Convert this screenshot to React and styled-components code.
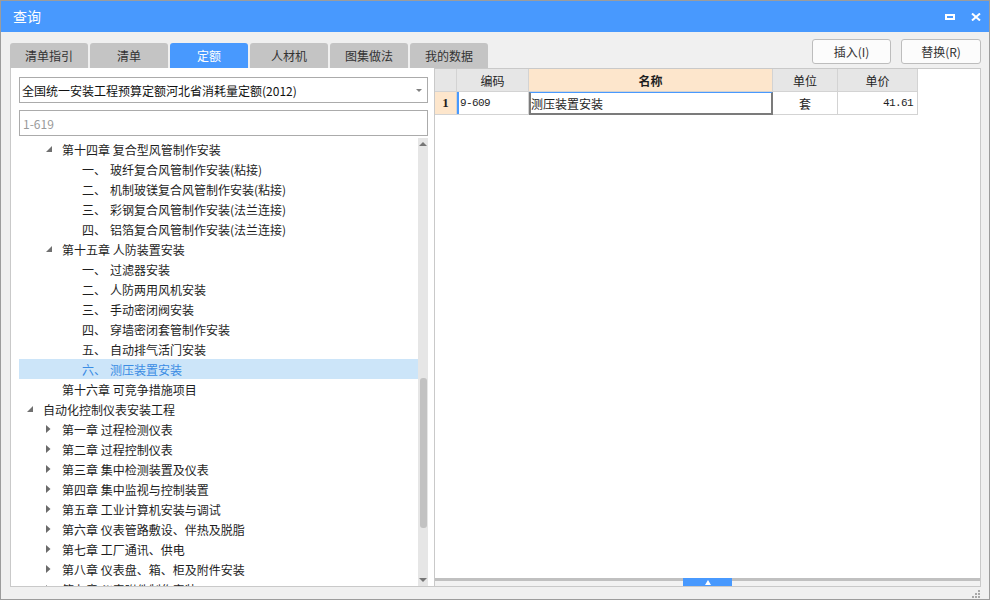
import React from "react";
import styled, { createGlobalStyle } from "styled-components";

const Global = createGlobalStyle`
  html, body { margin: 0; padding: 0; background: #ffffff; }
  body {
    font-family: "Noto Sans CJK SC", "Microsoft YaHei", "Noto Sans", sans-serif;
    font-size: 12px;
    color: #1e1e1e;
  }
  * { box-sizing: border-box; }
`;

const BLUE = "#4899fe";
const PEACH = "#fde6cc";
const GRIDLINE = "#d3d3d3";

const Window = styled.div`
  width: 990px;
  height: 600px;
  border: 1px solid #9c9c9c;
  background: #f0f0f0;
  display: flex;
  flex-direction: column;
  overflow: hidden;
`;

const TitleBar = styled.div`
  height: 31px;
  flex: none;
  background: ${BLUE};
  display: flex;
  align-items: center;
  padding: 0 8px 0 12px;
  color: #fff;
`;

const Title = styled.div`
  flex: 1;
  font-size: 14px;
  line-height: 31px;
`;

const TitleButtons = styled.div`
  display: flex;
  align-items: center;
  gap: 16px;
`;

const Body = styled.div`
  flex: 1;
  display: flex;
  flex-direction: column;
  padding: 7px 8px 0 9px;
  min-height: 0;
`;

const TopRow = styled.div`
  height: 29px;
  flex: none;
  display: flex;
  justify-content: space-between;
`;

const Tabs = styled.div`
  display: flex;
  gap: 2px;
  align-self: flex-end;
`;

const Tab = styled.div`
  width: 78px;
  height: 25px;
  border-radius: 3px 3px 0 0;
  background: ${(p) => (p.$active ? BLUE : "#c4c4c4")};
  color: ${(p) => (p.$active ? "#fff" : "#333")};
  display: flex;
  align-items: center;
  justify-content: center;
  font-size: 12px;
`;

const Actions = styled.div`
  display: flex;
  gap: 10px;
  align-self: flex-start;
`;

const ActionButton = styled.div`
  width: ${(p) => p.$w}px;
  height: 25px;
  background: #fcfcfc;
  border: 1px solid #bdbdbd;
  border-radius: 3px;
  display: flex;
  align-items: center;
  justify-content: center;
  color: #333;
  font-size: 12px;
`;

const Main = styled.div`
  height: 519px;
  flex: none;
  display: flex;
`;

const LeftPanel = styled.div`
  width: 425px;
  flex: none;
  background: #fff;
  border: 1px solid #c9c9c9;
  border-top: none;
  padding: 9px 6px 0 8px;
  display: flex;
  flex-direction: column;
`;

const Select = styled.div`
  height: 26px;
  flex: none;
  border: 1px solid #ababab;
  display: flex;
  align-items: center;
  padding: 0 5px 0 2px;
  color: #111;
`;

const SelectText = styled.div`
  flex: 1;
  white-space: nowrap;
`;

const SearchInput = styled.input`
  height: 26px;
  flex: none;
  margin-top: 7px;
  border: 1px solid #ababab;
  outline: none;
  padding: 0 3px;
  font-family: inherit;
  font-size: 12px;
  color: #222;
  &::placeholder { color: #9a9a9a; }
`;

const TreeArea = styled.div`
  margin-top: 2px;
  height: 448px;
  flex: none;
  display: flex;
`;

const TreeList = styled.div`
  flex: 1;
  overflow: hidden;
  padding-top: 1px;
`;

const TreeRow = styled.div`
  height: 20px;
  display: flex;
  align-items: center;
  white-space: nowrap;
  background: ${(p) => (p.$selected ? "#cce5f9" : "transparent")};
  color: ${(p) => (p.$selected ? "#3a8ce4" : "#1e1e1e")};
`;

const Indent = styled.span`
  width: ${(p) => p.$w}px;
  flex: none;
`;

const Toggle = styled.span`
  width: 24px;
  flex: none;
  height: 20px;
  display: flex;
  align-items: center;
  padding-left: 8px;
`;

const Prefix = styled.span`
  display: inline-block;
  width: 28px;
  flex: none;
`;

const Scrollbar = styled.div`
  width: 10px;
  flex: none;
  background: #e6e6e6;
  display: flex;
  flex-direction: column;
  align-items: center;
`;

const ScrollArrow = styled.div`
  height: 12px;
  flex: none;
  display: flex;
  align-items: center;
  justify-content: center;
`;

const ScrollTrack = styled.div`
  flex: 1;
  width: 100%;
  display: flex;
  flex-direction: column;
  align-items: center;
`;

const Thumb = styled.div`
  width: 7px;
  margin-top: ${(p) => p.$top}px;
  height: ${(p) => p.$h}px;
  border-radius: 3px;
  background: #c2c2c2;
`;

const RightPanel = styled.div`
  flex: 1;
  background: #fff;
  border: 1px solid #c9c9c9;
  border-left: none;
  display: flex;
  flex-direction: column;
`;

const GridArea = styled.div`
  flex: 1;
`;

const Grid = styled.div`
  display: grid;
  grid-template-columns: 22px 72px 244px 65px 80px;
  width: max-content;
`;

const Cell = styled.div`
  height: 23px;
  border-right: 1px solid ${GRIDLINE};
  border-bottom: 1px solid ${GRIDLINE};
  display: flex;
  align-items: center;
  justify-content: ${(p) => p.$justify || "center"};
  background: ${(p) => p.$bg || "#fff"};
  font-weight: ${(p) => (p.$bold ? 700 : 400)};
  padding: 0 3px;
  white-space: nowrap;
  color: #1e1e1e;
`;

const RowNumCell = styled(Cell)`
  font-family: "Liberation Serif", "DejaVu Serif", serif;
  font-size: 13px;
`;

const CodeCell = styled(Cell)`
  box-shadow: inset 2px 0 0 ${BLUE};
  font-family: "Liberation Mono", "DejaVu Sans Mono", monospace;
  font-size: 11px;
  letter-spacing: -0.6px;
  padding-left: 3px;
`;

const FocusCell = styled(Cell)`
  border: 2px solid #7b7b7b;
  border-top: 1px solid ${BLUE};
  padding-left: 0;
`;

const NumCell = styled(Cell)`
  font-family: "Liberation Mono", "DejaVu Sans Mono", monospace;
  font-size: 11px;
  letter-spacing: -0.6px;
  padding-right: 4px;
`;

const Splitter = styled.div`
  height: 8px;
  flex: none;
  display: flex;
  justify-content: center;
  background: linear-gradient(#c0c0c0 0, #c0c0c0 3px, #f2f2f2 3px, #f2f2f2 100%);
`;

const SplitHandle = styled.div`
  width: 49px;
  height: 8px;
  background: ${BLUE};
  display: flex;
  align-items: center;
  justify-content: center;
`;

const Footer = styled.div`
  height: 12px;
  flex: none;
  display: flex;
  justify-content: flex-end;
  align-items: flex-end;
  padding: 0 1px 1px 0;
`;

const ExpandedIcon = () => (
  <svg width="6" height="6" viewBox="0 0 6 6">
    <polygon points="6,0 6,6 0,6" fill="#707070" />
  </svg>
);

const CollapsedIcon = () => (
  <svg width="5" height="8" viewBox="0 0 5 8">
    <polygon points="0,0 4.5,4 0,8" fill="#6a6a6a" />
  </svg>
);

const tree = [
  { level: 1, state: "open", text: "第十四章 复合型风管制作安装" },
  { level: 2, prefix: "一、", text: "玻纤复合风管制作安装(粘接)" },
  { level: 2, prefix: "二、", text: "机制玻镁复合风管制作安装(粘接)" },
  { level: 2, prefix: "三、", text: "彩钢复合风管制作安装(法兰连接)" },
  { level: 2, prefix: "四、", text: "铝箔复合风管制作安装(法兰连接)" },
  { level: 1, state: "open", text: "第十五章 人防装置安装" },
  { level: 2, prefix: "一、", text: "过滤器安装" },
  { level: 2, prefix: "二、", text: "人防两用风机安装" },
  { level: 2, prefix: "三、", text: "手动密闭阀安装" },
  { level: 2, prefix: "四、", text: "穿墙密闭套管制作安装" },
  { level: 2, prefix: "五、", text: "自动排气活门安装" },
  { level: 2, prefix: "六、", text: "测压装置安装", selected: true },
  { level: 1, text: "第十六章 可竞争措施项目" },
  { level: 0, state: "open", text: "自动化控制仪表安装工程" },
  { level: 1, state: "closed", text: "第一章 过程检测仪表" },
  { level: 1, state: "closed", text: "第二章 过程控制仪表" },
  { level: 1, state: "closed", text: "第三章 集中检测装置及仪表" },
  { level: 1, state: "closed", text: "第四章 集中监视与控制装置" },
  { level: 1, state: "closed", text: "第五章 工业计算机安装与调试" },
  { level: 1, state: "closed", text: "第六章 仪表管路敷设、伴热及脱脂" },
  { level: 1, state: "closed", text: "第七章 工厂通讯、供电" },
  { level: 1, state: "closed", text: "第八章 仪表盘、箱、柜及附件安装" },
  { level: 1, state: "closed", text: "第九章 仪表附件制作安装" },
];

const tabs = ["清单指引", "清单", "定额", "人材机", "图集做法", "我的数据"];

export default function App() {
  return (
    <>
      <Global />
      <Window>
        <TitleBar>
          <Title>查询</Title>
          <TitleButtons>
            <svg width="10" height="6" viewBox="0 0 10 6">
              <rect x="1" y="1" width="8" height="4" fill="none" stroke="#fff" strokeWidth="2" />
            </svg>
            <svg width="10" height="8" viewBox="0 0 10 8">
              <path d="M1 0.5 L9 7.5 M9 0.5 L1 7.5" stroke="#fff" strokeWidth="2" />
            </svg>
          </TitleButtons>
        </TitleBar>
        <Body>
          <TopRow>
            <Tabs>
              {tabs.map((t) => (
                <Tab key={t} $active={t === "定额"}>
                  {t}
                </Tab>
              ))}
            </Tabs>
            <Actions>
              <ActionButton $w={79}>插入(I)</ActionButton>
              <ActionButton $w={80}>替换(R)</ActionButton>
            </Actions>
          </TopRow>
          <Main>
            <LeftPanel>
              <Select>
                <SelectText>全国统一安装工程预算定额河北省消耗量定额(2012)</SelectText>
                <svg width="6" height="3" viewBox="0 0 6 3">
                  <polygon points="0,0 6,0 3,3" fill="#808080" />
                </svg>
              </Select>
              <SearchInput placeholder="1-619" readOnly />
              <TreeArea>
                <TreeList>
                  {tree.map((n, i) => (
                    <TreeRow key={i} $selected={n.selected}>
                      <Indent $w={Math.floor(n.level * 19.5)} />
                      <Toggle>
                        {n.state === "open" && <ExpandedIcon />}
                        {n.state === "closed" && <CollapsedIcon />}
                      </Toggle>
                      {n.prefix && <Prefix>{n.prefix}</Prefix>}
                      <span>{n.text}</span>
                    </TreeRow>
                  ))}
                </TreeList>
                <Scrollbar>
                  <ScrollArrow>
                    <svg width="8" height="4" viewBox="0 0 8 4">
                      <polygon points="0,4 8,4 4,0" fill="#767676" />
                    </svg>
                  </ScrollArrow>
                  <ScrollTrack>
                    <Thumb $top={228} $h={150} />
                  </ScrollTrack>
                  <ScrollArrow>
                    <svg width="8" height="4" viewBox="0 0 8 4">
                      <polygon points="0,0 8,0 4,4" fill="#767676" />
                    </svg>
                  </ScrollArrow>
                </Scrollbar>
              </TreeArea>
            </LeftPanel>
            <RightPanel>
              <GridArea>
                <Grid>
                  <Cell $bg="#e6e6e6" />
                  <Cell $bg="#e6e6e6">编码</Cell>
                  <Cell $bg={PEACH} $bold>
                    名称
                  </Cell>
                  <Cell $bg="#e6e6e6">单位</Cell>
                  <Cell $bg="#e6e6e6">单价</Cell>

                  <RowNumCell $bg={PEACH} $bold>
                    1
                  </RowNumCell>
                  <CodeCell $justify="flex-start">9-609</CodeCell>
                  <FocusCell $justify="flex-start">测压装置安装</FocusCell>
                  <Cell>套</Cell>
                  <NumCell $justify="flex-end">41.61</NumCell>
                </Grid>
              </GridArea>
              <Splitter>
                <SplitHandle>
                  <svg width="6" height="5" viewBox="0 0 6 5">
                    <polygon points="0,5 6,5 3,0" fill="#fff" />
                  </svg>
                </SplitHandle>
              </Splitter>
            </RightPanel>
          </Main>
          <Footer>
            <svg width="8" height="8" viewBox="0 0 8 8">
              <g fill="#a8a8a8">
                <rect x="6" y="0" width="2" height="2" />
                <rect x="3" y="3" width="2" height="2" />
                <rect x="6" y="3" width="2" height="2" />
                <rect x="0" y="6" width="2" height="2" />
                <rect x="3" y="6" width="2" height="2" />
                <rect x="6" y="6" width="2" height="2" />
              </g>
            </svg>
          </Footer>
        </Body>
      </Window>
    </>
  );
}
